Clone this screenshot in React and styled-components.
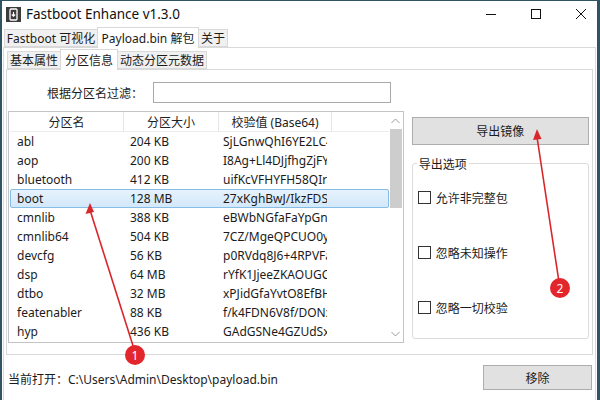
import React from 'react';
import styled, { createGlobalStyle } from 'styled-components';

const GlobalStyle = createGlobalStyle`
  html, body { margin: 0; padding: 0; background: #fff; }
  body {
    font-family: "Noto Sans", "Noto Sans CJK SC", sans-serif;
    font-size: 12px;
    color: #1b1b1b;
  }
`;

const partitions = [
  ['abl', '204 KB', 'SjLGnwQhI6YE2LC4xQ'],
  ['aop', '200 KB', 'I8Ag+Ll4DJjfhgZjFY'],
  ['bluetooth', '412 KB', 'uifKcVFHYFH58QIrk'],
  ['boot', '128 MB', '27xKghBwJ/IkzFDSa'],
  ['cmnlib', '388 KB', 'eBWbNGfaFaYpGnQ'],
  ['cmnlib64', '504 KB', '7CZ/MgeQPCUO0yM'],
  ['devcfg', '56 KB', 'p0RVdq8J6+4RPVFa'],
  ['dsp', '64 MB', 'rYfK1JjeeZKAOUGCq'],
  ['dtbo', '32 MB', 'xPJidGfaYvtO8EfBHn'],
  ['featenabler', '88 KB', 'f/k4FDN6V8f/DONx'],
  ['hyp', '436 KB', 'GAdGSNe4GZUdSxw'],
];

function App() {
  return (
    <>
      <GlobalStyle />
      <Screen>
        <TitleBar>
          <AppIcon viewBox="0 0 15 15">
            <rect x="0" y="0" width="15" height="15" fill="#3c3c3c" />
            <rect x="4" y="2" width="7" height="11" rx="1" fill="none" stroke="#fff" strokeWidth="1.3" />
            <path d="M7.5 5 v4 M5.8 7.5 l1.7 1.7 l1.7 -1.7" stroke="#fff" strokeWidth="1.1" fill="none" />
          </AppIcon>
          <Title>Fastboot Enhance v1.3.0</Title>
          <WinControls>
            <WinButton>
              <svg width="10" height="10" viewBox="0 0 10 10"><path d="M0 5.5 H10" stroke="#111" strokeWidth="1" /></svg>
            </WinButton>
            <WinButton>
              <svg width="10" height="10" viewBox="0 0 10 10"><rect x="0.5" y="0.5" width="9" height="9" fill="none" stroke="#111" strokeWidth="1" /></svg>
            </WinButton>
            <WinButton>
              <svg width="10" height="10" viewBox="0 0 10 10"><path d="M0 0 L10 10 M10 0 L0 10" stroke="#111" strokeWidth="1" /></svg>
            </WinButton>
          </WinControls>
        </TitleBar>

        <TabRow>
          <Tab $w={94}>Fastboot 可视化</Tab>
          <Tab $w={102} $active>Payload.bin 解包</Tab>
          <Tab $w={30}>关于</Tab>
        </TabRow>

        <OuterPanel>
          <InnerTabRow>
            <Tab $w={54}>基本属性</Tab>
            <Tab $w={58} $active>分区信息</Tab>
            <Tab $w={90}>动态分区元数据</Tab>
          </InnerTabRow>

          <InnerPanel>
            <FilterRow>
              <FilterLabel>根据分区名过滤：</FilterLabel>
              <FilterInput />
            </FilterRow>

            <ContentRow>
              <ListView>
                <ListBody>
                  <HeaderRow>
                    <HeadCell $w={114}>分区名</HeadCell>
                    <HeadCell $w={95}>分区大小</HeadCell>
                    <HeadCell $w={113}>校验值 (Base64)</HeadCell>
                    <HeadCell $w={57} $last />
                  </HeaderRow>
                  {partitions.map(([name, size, hash]) => (
                    <Row key={name} $selected={name === 'boot'}>
                      <Cell $w={114} $pad={6}>{name}</Cell>
                      <Cell $w={95} $pad={5}>{size}</Cell>
                      <Cell $w={107} $pad={3}>{hash}</Cell>
                    </Row>
                  ))}
                </ListBody>
                <ScrollBar>
                  <ScrollArrow>
                    <svg width="9" height="6" viewBox="0 0 9 6"><path d="M0.5 5 L4.5 1 L8.5 5" stroke="#9a9a9a" fill="none" /></svg>
                  </ScrollArrow>
                  <ScrollTrack>
                    <ScrollThumb />
                  </ScrollTrack>
                  <ScrollArrow>
                    <svg width="9" height="6" viewBox="0 0 9 6"><path d="M0.5 1 L4.5 5 L8.5 1" stroke="#9a9a9a" fill="none" /></svg>
                  </ScrollArrow>
                </ScrollBar>
              </ListView>

              <SidePanel>
                <Button $h={28}>导出镜像</Button>
                <GroupBox>
                  <GroupLegend>导出选项</GroupLegend>
                  <CheckRow><CheckBox />允许非完整包</CheckRow>
                  <CheckRow><CheckBox />忽略未知操作</CheckRow>
                  <CheckRow><CheckBox />忽略一切校验</CheckRow>
                </GroupBox>
              </SidePanel>
            </ContentRow>
          </InnerPanel>

          <StatusRow>
            <StatusText>当前打开：C:\Users\Admin\Desktop\payload.bin</StatusText>
            <Button $h={25} $w={109}>移除</Button>
          </StatusRow>
        </OuterPanel>

        <Annotations viewBox="0 0 600 400">
          <line x1="135" y1="352" x2="90" y2="210" stroke="#d9262b" strokeWidth="1.6" />
          <path d="M90 203 L85.5 214 L94 212 Z" fill="#d9262b" />
          <circle cx="135" cy="355" r="10" fill="#e3262c" />
          <text x="135" y="359.5" textAnchor="middle" fontSize="12" fill="#fff" fontFamily="Noto Sans, sans-serif">1</text>
          <line x1="559" y1="282" x2="537" y2="137" stroke="#d9262b" strokeWidth="1.6" />
          <path d="M537 129 L533 140 L541.5 139 Z" fill="#d9262b" />
          <circle cx="560" cy="288" r="10" fill="#e3262c" />
          <text x="560" y="292.5" textAnchor="middle" fontSize="12" fill="#fff" fontFamily="Noto Sans, sans-serif">2</text>
        </Annotations>
      </Screen>
    </>
  );
}

const Screen = styled.div`
  position: relative;
  width: 600px;
  height: 400px;
  overflow: hidden;
  box-sizing: border-box;
  background: #fff;
  border-top: 1px solid #2e5466;
  border-left: 2px solid #2e5466;
  border-right: 3px solid #2e5466;
  display: flex;
  flex-direction: column;
`;

const TitleBar = styled.div`
  height: 26px;
  display: flex;
  align-items: center;
  padding-left: 4px;
  flex-shrink: 0;
`;

const AppIcon = styled.svg`
  width: 15px;
  height: 15px;
  flex-shrink: 0;
`;

const Title = styled.div`
  margin-left: 5px;
  font-size: 13.5px;
  color: #111;
`;

const WinControls = styled.div`
  margin-left: auto;
  margin-right: -6px;
  display: flex;
  height: 100%;
`;

const WinButton = styled.div`
  width: 45px;
  display: flex;
  align-items: center;
  justify-content: center;
`;

const TabRow = styled.div`
  height: 20px;
  display: flex;
  align-items: flex-end;
  padding-left: 2px;
  flex-shrink: 0;
  position: relative;
  z-index: 1;
`;

const InnerTabRow = styled(TabRow)`
  height: 20px;
  padding-left: 1px;
  margin-top: 1px;
`;

const Tab = styled.div`
  box-sizing: border-box;
  width: ${p => p.$w}px;
  height: ${p => (p.$active ? 21 : 18)}px;
  margin-bottom: ${p => (p.$active ? -1 : 0)}px;
  background: ${p => (p.$active ? '#fff' : '#f0f0f0')};
  border: 1px solid #d9d9d9;
  border-bottom: ${p => (p.$active ? 'none' : '1px solid #d9d9d9')};
  margin-left: ${p => (p.$active ? -1 : 0)}px;
  margin-right: ${p => (p.$active ? -1 : 0)}px;
  position: relative;
  z-index: ${p => (p.$active ? 2 : 1)};
  display: flex;
  align-items: center;
  justify-content: center;
  white-space: nowrap;
  font-size: 12px;
  color: #1b1b1b;
`;

const OuterPanel = styled.div`
  flex: 1;
  margin: 0 1px 0 1px;
  border: 1px solid #d9d9d9;
  border-bottom: none;
  display: flex;
  flex-direction: column;
  padding: 0 2px;
`;

const InnerPanel = styled.div`
  height: 286px;
  box-sizing: border-box;
  border: 1px solid #d9d9d9;
  padding: 12px 3px 0 1px;
  display: flex;
  flex-direction: column;
`;

const FilterRow = styled.div`
  display: flex;
  align-items: center;
  height: 21px;
  padding-left: 39px;
`;

const FilterLabel = styled.div`
  width: 106px;
  white-space: nowrap;
`;

const FilterInput = styled.div`
  width: 238px;
  height: 21px;
  box-sizing: border-box;
  border: 1px solid #a9a9a9;
  background: #fff;
`;

const ContentRow = styled.div`
  margin-top: 8px;
  display: flex;
  gap: 8px;
`;

const ListView = styled.div`
  width: 397px;
  height: 232px;
  box-sizing: border-box;
  border: 1px solid #c4c4c4;
  display: flex;
  overflow: hidden;
`;

const ListBody = styled.div`
  flex: 1;
  display: flex;
  flex-direction: column;
  padding-left: 1px;
`;

const HeaderRow = styled.div`
  height: 20px;
  display: flex;
  border-bottom: 1px solid #ececec;
  box-sizing: border-box;
`;

const HeadCell = styled.div`
  width: ${p => p.$w}px;
  box-sizing: border-box;
  border-right: ${p => (p.$last ? 'none' : '1px solid #e5e5e5')};
  display: flex;
  align-items: center;
  justify-content: center;
  color: #222;
  white-space: nowrap;
`;

const Row = styled.div`
  height: 19px;
  display: flex;
  align-items: center;
  box-sizing: border-box;
  border: 1px solid ${p => (p.$selected ? '#84bde8' : 'transparent')};
  background: ${p => (p.$selected ? 'linear-gradient(#e6f2fc, #d3e8fa)' : 'transparent')};
  border-radius: 2px;
`;

const Cell = styled.div`
  width: ${p => p.$w}px;
  box-sizing: border-box;
  padding-left: ${p => p.$pad}px;
  white-space: nowrap;
  overflow: hidden;
  color: #1b1b1b;
`;

const ScrollBar = styled.div`
  width: 16px;
  display: flex;
  flex-direction: column;
  background: #fff;
`;

const ScrollArrow = styled.div`
  height: 17px;
  display: flex;
  align-items: center;
  justify-content: center;
  flex-shrink: 0;
`;

const ScrollTrack = styled.div`
  flex: 1;
  padding: 0 1px;
`;

const ScrollThumb = styled.div`
  height: 79px;
  background: #cdcdcd;
`;

const SidePanel = styled.div`
  width: 178px;
  padding-top: 6px;
  display: flex;
  flex-direction: column;
`;

const Button = styled.div`
  height: ${p => p.$h}px;
  width: ${p => (p.$w ? `${p.$w}px` : 'auto')};
  box-sizing: border-box;
  background: #e1e1e1;
  border: 1px solid #adadad;
  display: flex;
  align-items: center;
  justify-content: center;
  color: #1b1b1b;
  flex-shrink: 0;
`;

const GroupBox = styled.div`
  position: relative;
  margin-top: 18px;
  height: 176px;
  box-sizing: border-box;
  border: 1px solid #dcdcdc;
  border-radius: 3px;
  padding: 26px 0 0 5px;
  display: flex;
  flex-direction: column;
  gap: 40px;
`;

const GroupLegend = styled.div`
  position: absolute;
  top: -9px;
  left: 4px;
  padding: 0 2px;
  background: #fff;
  color: #1b1b1b;
`;

const CheckRow = styled.div`
  height: 15px;
  display: flex;
  align-items: center;
  gap: 5px;
`;

const CheckBox = styled.div`
  width: 13px;
  height: 13px;
  box-sizing: border-box;
  border: 1px solid #333;
  background: #fff;
`;

const StatusRow = styled.div`
  flex: 1;
  display: flex;
  align-items: center;
  justify-content: space-between;
  padding: 0 1px 0 2px;
`;

const StatusText = styled.div`
  white-space: nowrap;
  padding-top: 3px;
`;

const Annotations = styled.svg`
  position: absolute;
  left: -2px;
  top: -1px;
  width: 600px;
  height: 400px;
  pointer-events: none;
`;

export default App;
